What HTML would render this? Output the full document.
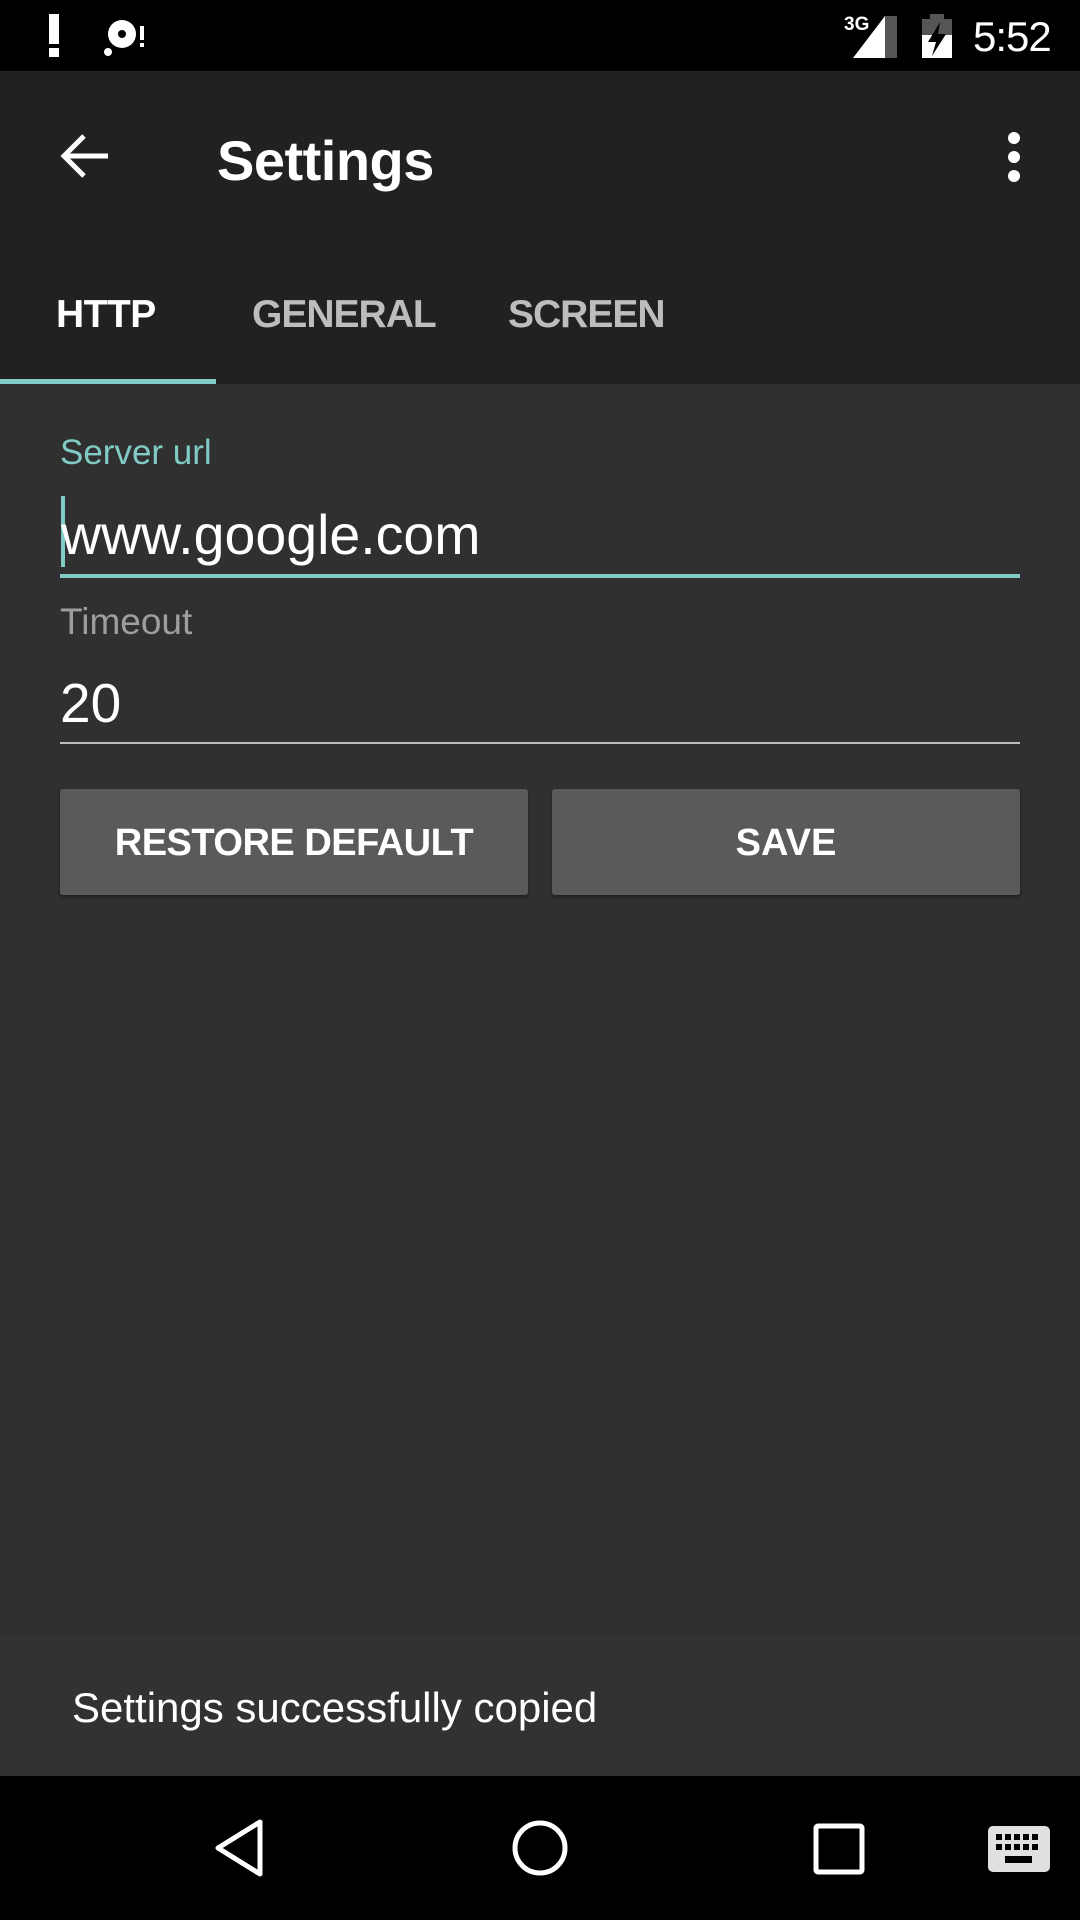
<!DOCTYPE html>
<html><head><meta charset="utf-8"><style>
*{margin:0;padding:0;box-sizing:border-box}
body{width:1080px;height:1920px;background:#303030;font-family:"Liberation Sans",sans-serif;position:relative;overflow:hidden;color:#fff}
.abs{position:absolute}
</style></head><body>
<div class="abs" style="left:0;top:0;width:1080px;height:71px;background:#000"></div>
<div class="abs" style="left:49px;top:14px;width:10px;height:30px;background:#fff"></div>
<div class="abs" style="left:49px;top:48px;width:10px;height:9px;background:#fff"></div>
<svg class="abs" style="left:100px;top:14px" width="50" height="46" viewBox="0 0 50 46"><circle cx="22" cy="20" r="14" fill="#fff"/><circle cx="22" cy="20" r="4" fill="#000"/><circle cx="8" cy="38" r="4" fill="#fff"/><rect x="40" y="12" width="4" height="14" fill="#fff"/><rect x="40" y="29" width="4" height="4" fill="#fff"/></svg>
<div class="abs" style="left:844px;top:14px;font-size:19px;font-weight:bold">3G</div>
<svg class="abs" style="left:853px;top:16px" width="46" height="42"><polygon points="0,42 32,0 32,42" fill="#fff"/><polygon points="32,0 44,0 44,42 32,42" fill="#555"/></svg>
<svg class="abs" style="left:922px;top:14px" width="30" height="44"><rect x="8" y="0" width="14" height="6" fill="#555"/><rect x="0" y="5" width="30" height="39" fill="#fff"/><rect x="0" y="5" width="30" height="16" fill="#555"/><polygon points="18,8 6,28 14,28 10,42 24,20 16,20" fill="#000"/></svg>
<div class="abs" style="left:973px;top:13px;font-size:42px;letter-spacing:-1px">5:52</div>

<div class="abs" style="left:0;top:71px;width:1080px;height:313px;background:#212121"></div>
<svg class="abs" style="left:58px;top:132px" width="52" height="48" viewBox="0 0 52 48"><path d="M50 24H6M26 4L6 24l20 20" stroke="#fff" stroke-width="5" fill="none"/></svg>
<div class="abs" style="left:217px;top:128px;font-size:56px;font-weight:bold;letter-spacing:-0.5px">Settings</div>
<svg class="abs" style="left:1004px;top:132px" width="20" height="50"><circle cx="10" cy="6" r="6" fill="#fff"/><circle cx="10" cy="25" r="6" fill="#fff"/><circle cx="10" cy="44" r="6" fill="#fff"/></svg>
<div class="abs" style="left:56px;top:293px;font-size:39px;font-weight:bold;letter-spacing:-0.5px">HTTP</div>
<div class="abs" style="left:252px;top:293px;font-size:39px;font-weight:bold;color:#bdbdbd;letter-spacing:-1px">GENERAL</div>
<div class="abs" style="left:508px;top:293px;font-size:39px;font-weight:bold;color:#bdbdbd;letter-spacing:-1px">SCREEN</div>
<div class="abs" style="left:0;top:379px;width:216px;height:5px;background:#80cbc4"></div>

<div class="abs" style="left:60px;top:433px;font-size:35px;color:#80cbc4">Server url</div>
<div class="abs" style="left:61px;top:496px;width:4px;height:71px;background:#80cbc4"></div>
<div class="abs" style="left:61px;top:503px;font-size:55.5px;color:#fff">www.google.com</div>
<div class="abs" style="left:60px;top:574px;width:960px;height:4px;background:#80cbc4"></div>
<div class="abs" style="left:60px;top:601px;font-size:37px;color:#9e9e9e">Timeout</div>
<div class="abs" style="left:60px;top:671px;font-size:55px;color:#fff">20</div>
<div class="abs" style="left:60px;top:742px;width:960px;height:2px;background:#bdbdbd"></div>

<div class="abs" style="left:60px;top:789px;width:468px;height:106px;background:#5a5a5c;border-radius:3px;box-shadow:0 2px 3px rgba(0,0,0,.4);font-size:38px;font-weight:bold;text-align:center;line-height:108px;letter-spacing:-0.5px">RESTORE DEFAULT</div>
<div class="abs" style="left:552px;top:789px;width:468px;height:106px;background:#5a5a5c;border-radius:3px;box-shadow:0 2px 3px rgba(0,0,0,.4);font-size:38px;font-weight:bold;text-align:center;line-height:108px">SAVE</div>

<div class="abs" style="left:0;top:1635px;width:1080px;height:141px;background:#323232"></div>
<div class="abs" style="left:72px;top:1684px;font-size:42px;color:#fff">Settings successfully copied</div>

<div class="abs" style="left:0;top:1776px;width:1080px;height:144px;background:#000"></div>
<svg class="abs" style="left:212px;top:1818px" width="56" height="60"><polygon points="48,4 48,56 6,30" fill="none" stroke="#fff" stroke-width="5" stroke-linejoin="round"/></svg>
<svg class="abs" style="left:510px;top:1818px" width="60" height="60"><circle cx="30" cy="30" r="25" fill="none" stroke="#fff" stroke-width="5"/></svg>
<svg class="abs" style="left:812px;top:1822px" width="54" height="54"><rect x="4" y="4" width="46" height="46" rx="2" fill="none" stroke="#fff" stroke-width="5"/></svg>
<svg class="abs" style="left:988px;top:1826px" width="62" height="46"><rect x="0" y="0" width="62" height="46" rx="5" fill="#e0e0e0"/><g fill="#000"><rect x="8" y="8" width="6" height="6"/><rect x="17" y="8" width="6" height="6"/><rect x="26" y="8" width="6" height="6"/><rect x="35" y="8" width="6" height="6"/><rect x="44" y="8" width="6" height="6"/><rect x="8" y="18" width="6" height="6"/><rect x="17" y="18" width="6" height="6"/><rect x="26" y="18" width="6" height="6"/><rect x="35" y="18" width="6" height="6"/><rect x="44" y="18" width="6" height="6"/><rect x="17" y="30" width="27" height="7"/></g></svg>
</body></html>
